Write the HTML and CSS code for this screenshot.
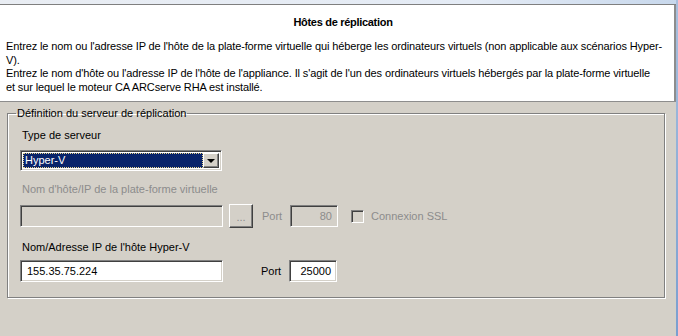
FILE: index.html
```html
<!DOCTYPE html>
<html lang="fr">
<head>
<meta charset="utf-8">
<title>Hôtes de réplication</title>
<link rel="stylesheet" href="styles.css">
</head>
<body>
<div class="window">
  <div class="main">
    <div class="topbar"></div>
    <div class="header">
      <h1 class="title">Hôtes de réplication</h1>
      <p class="desc">Entrez le nom ou l'adresse IP de l'hôte de la plate-forme virtuelle qui héberge les ordinateurs virtuels (non applicable aux scénarios Hyper-V).</p>
      <p class="desc">Entrez le nom d'hôte ou l'adresse IP de l'hôte de l'appliance. Il s'agit de l'un des ordinateurs virtuels hébergés par la plate-forme virtuelle<br>et sur lequel le moteur CA ARCserve RHA est installé.</p>
    </div>
    <div class="body">
      <fieldset class="group">
        <legend class="legend">Définition du serveur de réplication</legend>
        <div class="label first">Type de serveur</div>
        <div class="select">
          <div class="select-value"><span class="focus">Hyper-V</span></div>
          <div class="select-btn"><span class="arrow"></span></div>
        </div>
        <div class="label disabled gap2">Nom d'hôte/IP de la plate-forme virtuelle</div>
        <div class="row">
          <div class="field wide off"></div>
          <div class="btn">...</div>
          <span class="port-label disabled">Port</span>
          <div class="field port off">80</div>
          <span class="check"></span>
          <span class="check-label disabled">Connexion SSL</span>
        </div>
        <div class="label gap3">Nom/Adresse IP de l'hôte Hyper-V</div>
        <div class="row">
          <div class="field wide">155.35.75.224</div>
          <span class="port-label spaced">Port</span>
          <div class="field port">25000</div>
        </div>
      </fieldset>
    </div>
  </div>
  <div class="edge"></div>
</div>
</body>
</html>
```
FILE: styles.css
```css
html, body {
  margin: 0;
  padding: 0;
}
body {
  width: 678px;
  height: 336px;
  overflow: hidden;
  background: #d4d0c8;
  font-family: "Liberation Sans", Arial, sans-serif;
  font-size: 11px;
  color: #000;
}
.window {
  display: flex;
  height: 336px;
}
.main {
  flex: 1;
  display: flex;
  flex-direction: column;
}
.edge {
  width: 2px;
  background: linear-gradient(#a9c0de, #7a9fd0);
}
.topbar {
  height: 4px;
  background: linear-gradient(90deg, #e9edf3, #e4ebf5 70%, #c8d8ec);
  border-bottom: 1px solid #7f7f7f;
}
.header {
  height: 97px;
  box-sizing: border-box;
  background: #fff;
  border-right: 2px solid #8d8d8d;
  border-bottom: 1px solid #8d8d8d;
  padding: 10px 7px 0 6px;
}
.title {
  margin: 0 0 11px;
  font-size: 11px;
  font-weight: bold;
  text-align: center;
  line-height: 14px;
  letter-spacing: -0.3px;
  padding-left: 13px;
}
.desc {
  margin: 0;
  line-height: 13.7px;
  letter-spacing: -0.12px;
}
.body {
  padding: 5px 11px 0 7px;
}
.group {
  margin: 0;
  padding: 0 12px 15px 12px;
  border: 1px solid #808080;
  box-shadow: inset 1px 1px 0 #fff, 1px 1px 0 #fff;
  min-width: 0;
}
.legend {
  padding: 0 1px;
  margin-left: -4px;
  line-height: 13px;
}
.label {
  line-height: 14px;
  padding-left: 2px;
}
.label.first { margin-top: 8px; margin-bottom: 8px; }
.label.gap2 { margin-top: 11px; margin-bottom: 8px; }
.label.gap3 { margin-top: 12px; margin-bottom: 6px; }
.disabled { color: #8c8c8c; }

.select {
  width: 202px;
  height: 21px;
  box-sizing: border-box;
  display: flex;
  border-top: 1px solid #808080;
  border-left: 1px solid #808080;
  border-right: 1px solid #fff;
  border-bottom: 1px solid #fff;
  box-shadow: inset 1px 1px 0 #404040, inset -1px -1px 0 #d4d0c8;
  padding: 2px;
  background: #fff;
}
.select-value {
  flex: 1;
  background: #0a246a;
  color: #fff;
  display: flex;
}
.focus {
  flex: 1;
  border: 1px dotted #e8d48a;
  line-height: 13px;
  padding-left: 1px;
}
.select-btn {
  width: 16px;
  background: #d4d0c8;
  box-sizing: border-box;
  border-top: 1px solid #fff;
  border-left: 1px solid #fff;
  border-right: 1px solid #404040;
  border-bottom: 1px solid #404040;
  box-shadow: inset -1px -1px 0 #808080;
  display: flex;
  align-items: center;
  justify-content: center;
}
.arrow {
  width: 0;
  height: 0;
  border-left: 4px solid transparent;
  border-right: 4px solid transparent;
  border-top: 4px solid #000;
  margin-top: 1px;
}

.row {
  display: flex;
  align-items: center;
}
.field {
  height: 22px;
  box-sizing: border-box;
  border-top: 1px solid #808080;
  border-left: 1px solid #808080;
  border-right: 1px solid #fff;
  border-bottom: 1px solid #fff;
  box-shadow: inset 1px 1px 0 #404040, inset -1px -1px 0 #d4d0c8;
  background: #fff;
  line-height: 20px;
  padding: 0 4px;
}
.field.off {
  background: #d4d0c8;
  color: #8c8c8c;
}
.field.wide {
  width: 203px;
  padding-left: 6px;
}
.field.port {
  width: 48px;
  text-align: right;
  padding-right: 5px;
}
.btn {
  width: 24px;
  height: 24px;
  box-sizing: border-box;
  margin-left: 6px;
  border-top: 1px solid #fff;
  border-left: 1px solid #fff;
  border-right: 1px solid #404040;
  border-bottom: 1px solid #404040;
  box-shadow: inset -1px -1px 0 #808080;
  color: #8c8c8c;
  text-align: center;
  line-height: 24px;
}
.port-label {
  margin-left: 9px;
  width: 28px;
}
.port-label.spaced {
  margin-left: 38px;
}
.check {
  width: 13px;
  height: 13px;
  box-sizing: border-box;
  margin-left: 13px;
  border-top: 1px solid #808080;
  border-left: 1px solid #808080;
  border-right: 1px solid #fff;
  border-bottom: 1px solid #fff;
  box-shadow: inset 1px 1px 0 #404040;
  background: #d4d0c8;
}
.check-label {
  margin-left: 7px;
}
```
